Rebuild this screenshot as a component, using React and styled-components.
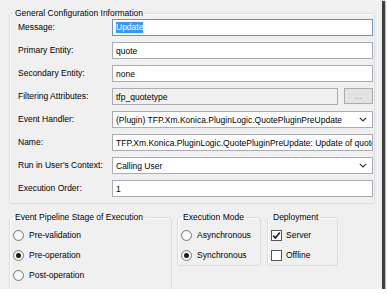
import React from "react";
import styled, { createGlobalStyle } from "styled-components";

const Global = createGlobalStyle`
  html, body { margin: 0; padding: 0; background: #ffffff; }
  body { font-family: "Liberation Sans", Arial, sans-serif; }
`;

const Window = styled.div`
  box-sizing: border-box;
  width: 382px;
  height: 289px;
  background: #f0f0f0;
  padding: 8px 0 0 9px;
  overflow: hidden;
  box-shadow: 2px 2px 1px 1px rgba(40, 40, 40, 0.85), 3px 3px 3px rgba(0, 0, 0, 0.35);
  font-family: "Liberation Sans", Arial, sans-serif;
  font-size: 8.5px;
  color: #000;
`;

const Group = styled.fieldset`
  box-sizing: border-box;
  margin: 0;
  min-width: 0;
  width: ${(p) => p.$width}px;
  height: ${(p) => (p.$height ? `${p.$height}px` : "auto")};
  border: 1px solid #d5dfe5;
  border-radius: 3px;
  box-shadow: inset 1px 1px 0 #ffffff;
  padding: ${(p) => p.$pad || "3px 3px 0 3px"};
`;

const Legend = styled.legend`
  padding: 0 2px;
  margin-left: ${(p) => p.$shift || 0}px;
  font-size: 8.5px;
  line-height: 10px;
  color: #000;
`;

const Form = styled.div`
  display: grid;
  grid-template-columns: 94px 1fr;
  row-gap: 6px;
  align-items: center;
`;

const Label = styled.div`
  white-space: nowrap;
  line-height: 17px;
`;

const Field = styled.div`
  box-sizing: border-box;
  height: 17px;
  display: flex;
  align-items: center;
  gap: 4px;
  padding: 0 3px;
  border: 1px solid ${(p) => (p.$focused ? "#6f93bd" : "#abadb3")};
  background: ${(p) => (p.$disabled ? "#f0f0f0" : "#ffffff")};
  white-space: nowrap;
  overflow: hidden;
  min-width: 0;
  flex: 1;
`;

const FieldText = styled.span`
  flex: 1;
  overflow: hidden;
  white-space: nowrap;
`;

const Selected = styled.span`
  background: #3399ff;
  color: #ffffff;
  line-height: 11px;
`;

const Pair = styled.div`
  display: flex;
  gap: 6px;
`;

const Browse = styled.div`
  box-sizing: border-box;
  width: 29px;
  height: 16px;
  border: 1px solid #acacac;
  background: #e3e3e3;
  color: #777;
  font-size: 7px;
  display: flex;
  align-items: center;
  justify-content: center;
  letter-spacing: 0.5px;
`;

const Chevron = () => (
  <svg width="8" height="5" viewBox="0 0 8 5" style={{ flex: "none", marginRight: 2 }}>
    <polyline points="0.8,0.8 4,4 7.2,0.8" fill="none" stroke="#333" strokeWidth="1.2" />
  </svg>
);

const BottomRow = styled.div`
  display: flex;
  align-items: flex-start;
  margin-top: 8px;
`;

const Spacer = styled.div`
  width: ${(p) => p.$w}px;
  flex: none;
`;

const Option = styled.div`
  display: flex;
  align-items: center;
  height: 20px;
  gap: ${(p) => p.$gap || 5}px;
  white-space: nowrap;
`;

const Radio = styled.span`
  box-sizing: border-box;
  width: 11px;
  height: 11px;
  border-radius: 50%;
  border: 1px solid #7a7a7a;
  background: radial-gradient(circle at 50% 50%, #ffffff 0%, #f4f4f4 70%, #e6e6e6 100%);
  display: flex;
  align-items: center;
  justify-content: center;
  flex: none;
  &::after {
    content: "";
    width: 5px;
    height: 5px;
    border-radius: 50%;
    background: ${(p) => (p.$checked ? "#1a1a1a" : "transparent")};
  }
`;

const Box = styled.span`
  box-sizing: border-box;
  width: 11px;
  height: 11px;
  border: 1px solid #555;
  background: #ffffff;
  display: flex;
  align-items: center;
  justify-content: center;
  flex: none;
`;

const Check = () => (
  <svg width="9" height="9" viewBox="0 0 9 9">
    <path d="M1.2 4.6 L3.4 7 L7.8 1.4" fill="none" stroke="#1a1a1a" strokeWidth="1.6" />
  </svg>
);

const rows = [
  { label: "Message:", content: <Field $focused><Selected>Update</Selected></Field> },
  { label: "Primary Entity:", content: <Field>quote</Field> },
  { label: "Secondary Entity:", content: <Field>none</Field> },
  {
    label: "Filtering Attributes:",
    content: (
      <Pair>
        <Field $disabled>tfp_quotetype</Field>
        <Browse>...</Browse>
      </Pair>
    ),
  },
  {
    label: "Event Handler:",
    content: (
      <Field>
        <FieldText>(Plugin) TFP.Xm.Konica.PluginLogic.QuotePluginPreUpdate</FieldText>
        <Chevron />
      </Field>
    ),
  },
  {
    label: "Name:",
    content: <Field>TFP.Xm.Konica.PluginLogic.QuotePluginPreUpdate: Update of quote</Field>,
  },
  {
    label: "Run in User's Context:",
    content: (
      <Field>
        <FieldText>Calling User</FieldText>
        <Chevron />
      </Field>
    ),
  },
  { label: "Execution Order:", content: <Field>1</Field> },
];

export default function App() {
  return (
    <>
      <Global />
      <Window>
        <Group $width={366} $pad="1px 1px 6px 8px">
          <Legend $shift={-5}>General Configuration Information</Legend>
          <Form>
            {rows.map((r) => (
              <React.Fragment key={r.label}>
                <Label>{r.label}</Label>
                {r.content}
              </React.Fragment>
            ))}
          </Form>
        </Group>
        <BottomRow>
          <Group $width={163} $height={100}>
            <Legend>Event Pipeline Stage of Execution</Legend>
            <Option><Radio />Pre-validation</Option>
            <Option><Radio $checked />Pre-operation</Option>
            <Option><Radio />Post-operation</Option>
          </Group>
          <Spacer $w={5} />
          <Group $width={84}>
            <Legend>Execution Mode</Legend>
            <Option><Radio />Asynchronous</Option>
            <Option><Radio $checked />Synchronous</Option>
          </Group>
          <Spacer $w={6} />
          <Group $width={71}>
            <Legend>Deployment</Legend>
            <Option $gap={4}><Box><Check /></Box>Server</Option>
            <Option $gap={4}><Box />Offline</Option>
          </Group>
        </BottomRow>
      </Window>
    </>
  );
}
